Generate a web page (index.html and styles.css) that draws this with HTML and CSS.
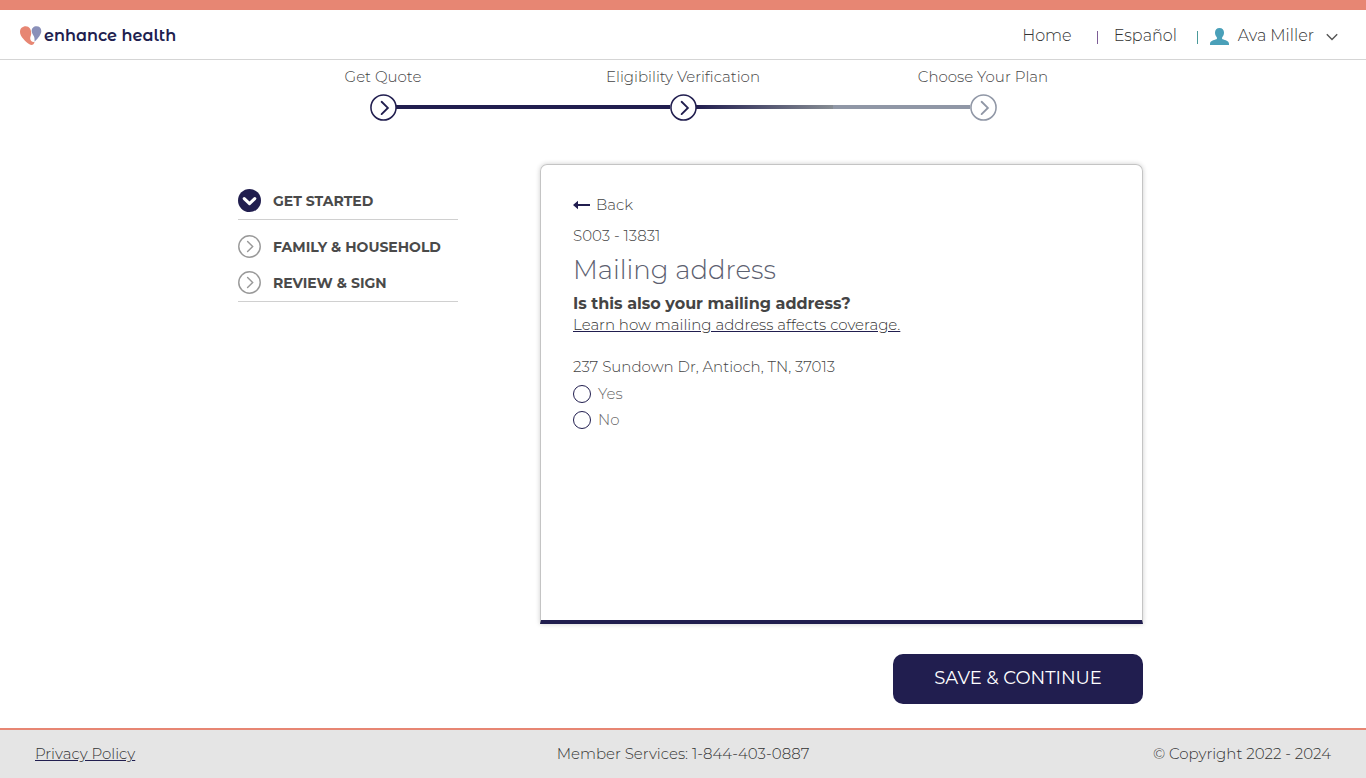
FILE: index.html
```html
<!DOCTYPE html>
<html lang="en">
<head>
<meta charset="utf-8">
<meta name="viewport" content="width=device-width, initial-scale=1">
<title>Mailing address | Enhance Health</title>
<link rel="stylesheet" href="styles.css">
</head>
<body>
<header class="header">
  <a class="logo" href="#">
    <svg class="logo-mark" viewBox="0 0 22 20" aria-hidden="true">
      <path fill="#e78673" d="M5.800.3C2.400.3 0 2.500 0 5.900c0 4.600 5.600 9.600 9.400 12.300 2.200 1.500 4.700.5 5.100-2.200-2.400.4-4.300-1.100-4.300-3.700 0-1.800.9-2.800 1-4.900C11.300 3.300 9.200.3 5.800.3z"/>
      <path fill="#8a90b9" d="M16.500.3c-2.900 0-4.900 2-4.800 5 .1 2.400 1.700 3.500 2.400 5.500.6 1.700.4 3.500.5 4.900C18.400 12 21.300 8.200 21.300 5c0-2.900-1.900-4.700-4.800-4.700z"/>
    </svg>
    <span>enhance health</span>
  </a>
  <nav class="nav">
    <a class="nav-link" href="#">Home</a>
    <span class="divider"></span>
    <a class="nav-link" href="#">Español</a>
    <span class="divider divider-user"></span>
    <button class="user" type="button">
      <svg class="user-icon" viewBox="0 0 19 17" aria-hidden="true"><path fill="#4aa0b9" d="M9.500 0C6.700 0 5 1.800 5 4.600c0 1.900.7 3.700 1.900 4.800v1.700c-1 .8-6.900 1.300-6.900 4.600V17h19v-1.300c0-3.300-5.900-3.800-6.900-4.600V9.400C13.300 8.300 14 6.500 14 4.600 14 1.800 12.300 0 9.500 0z"/></svg>
      <span>Ava Miller</span>
      <svg class="caret" viewBox="0 0 12 8" aria-hidden="true"><path d="M.8 1.200 6 6.500l5.200-5.300"/></svg>
    </button>
  </nav>
</header>

<ol class="steps">
  <li class="step">
    <span>Get Quote</span>
    <svg class="step-icon" viewBox="0 0 26 26" aria-hidden="true"><circle cx="13" cy="13" r="12.100"/><path d="m11.200 7.500 6 5.900-6 5.900"/></svg>
  </li>
  <li class="step step-current" aria-current="step">
    <span>Eligibility Verification</span>
    <svg class="step-icon" viewBox="0 0 26 26" aria-hidden="true"><circle cx="13" cy="13" r="12.100"/><path d="m11.200 7.500 6 5.900-6 5.900"/></svg>
  </li>
  <li class="step step-next">
    <span>Choose Your Plan</span>
    <svg class="step-icon" viewBox="0 0 26 26" aria-hidden="true"><circle cx="13" cy="13" r="12.100"/><path d="m11.200 7.500 6 5.900-6 5.900"/></svg>
  </li>
</ol>

<main class="main">
  <nav class="sections" aria-label="Application sections">
    <a class="section section-open" href="#">
      <svg class="section-icon" viewBox="0 0 24 24" aria-hidden="true"><circle cx="12" cy="12" r="12" fill="#211e4f"/><path d="m6.500 10 5.500 5.300L17.500 10" fill="none" stroke="#fff" stroke-width="3.200" stroke-linecap="round" stroke-linejoin="round"/></svg>
      <span>GET STARTED</span>
    </a>
    <div class="section-group">
      <a class="section" href="#">
        <svg class="section-icon" viewBox="0 0 24 24" aria-hidden="true"><g fill="none" stroke="#999" stroke-width="1.500"><circle cx="12" cy="12" r="11.200"/><path d="m10 6.800 5.300 5.200-5.300 5.200" stroke-linecap="round"/></g></svg>
        <span>FAMILY &amp; HOUSEHOLD</span>
      </a>
      <a class="section" href="#">
        <svg class="section-icon" viewBox="0 0 24 24" aria-hidden="true"><g fill="none" stroke="#999" stroke-width="1.500"><circle cx="12" cy="12" r="11.200"/><path d="m10 6.800 5.300 5.200-5.300 5.200" stroke-linecap="round"/></g></svg>
        <span>REVIEW &amp; SIGN</span>
      </a>
    </div>
  </nav>

  <form class="form">
    <div class="card">
      <a class="back" href="#">
        <svg class="back-icon" viewBox="0 0 17 10" aria-hidden="true"><path fill="#211e4f" d="M0 5 5 .7v3.200h12v2.200H5v3.200z"/></svg>
        <span>Back</span>
      </a>
      <p class="code">S003 - 13831</p>
      <h1 class="title">Mailing address</h1>
      <h2 class="question" id="question">Is this also your mailing address?</h2>
      <a class="learn" href="#">Learn how mailing address affects coverage.</a>
      <p class="address">237 Sundown Dr, Antioch, TN, 37013</p>
      <div class="options" role="radiogroup" aria-labelledby="question">
        <label class="option"><input class="radio" type="radio" name="mailing" value="yes">Yes</label>
        <label class="option"><input class="radio" type="radio" name="mailing" value="no">No</label>
      </div>
    </div>
    <button class="save" type="button">SAVE &amp; CONTINUE</button>
  </form>
</main>

<footer class="footer">
  <a class="privacy" href="#">Privacy Policy</a>
  <span>Member Services: 1-844-403-0887</span>
  <span class="copyright">© Copyright 2022 - 2024</span>
</footer>
</body>
</html>
```

FILE: styles.css
```css
:root {
  --navy: #211e4f;
  --coral: #e78673;
  --grey: #9097a6;
}

* {
  box-sizing: border-box;
}

body {
  display: flex;
  flex-direction: column;
  min-height: 100vh;
  margin: 0;
  background: #fff;
  color: #444;
  font: 300 15px/20px Montserrat, Inter, "Liberation Sans", sans-serif;
}

a {
  color: inherit;
  text-decoration: none;
}

button {
  font: inherit;
  cursor: pointer;
}

p,
h1,
h2 {
  margin: 0;
}

.header {
  display: flex;
  align-items: center;
  justify-content: space-between;
  height: 60px;
  padding: 3px 28px 0 20px;
  border-top: 10px solid var(--coral);
  border-bottom: 1px solid #d5d5d5;
}

.logo {
  display: flex;
  align-items: center;
  gap: 2px;
  color: var(--navy);
  font-family: "Montserrat Alternates", Montserrat, Lato, sans-serif;
  font-size: 16px;
  font-weight: 600;
}

.logo-mark {
  width: 22px;
  height: 20px;
}

.nav {
  display: flex;
  align-items: center;
  color: #333;
  font-size: 16px;
}

.divider {
  width: 1px;
  height: 13px;
  margin: 2px 16px 0 25px;
  background: #7d5d96;
}

.divider-user {
  margin: 2px 12px 0 20px;
  background: #4a9a9a;
}

.user {
  display: flex;
  align-items: center;
  padding: 0;
  border: 0;
  background: none;
  color: inherit;
}

.user-icon {
  width: 19px;
  height: 17px;
  margin-right: 9px;
}

.caret {
  width: 12px;
  height: 8px;
  margin: 2px 0 0 12px;
  fill: none;
  stroke: #555;
  stroke-width: 1.4;
}

.steps {
  display: grid;
  grid-template-columns: repeat(3, 1fr);
  width: 100%;
  max-width: 900px;
  margin: 0 auto;
  padding: 7px 0 0;
  list-style: none;
}

.step {
  position: relative;
  display: flex;
  flex-direction: column;
  align-items: center;
  gap: 7px;
}

.step-icon {
  width: 27px;
  height: 27px;
  fill: none;
  stroke: var(--navy);
  stroke-width: 1.5;
}

.step-icon path {
  stroke-width: 1.8;
  stroke-linecap: round;
}

.step-next .step-icon {
  stroke: var(--grey);
}

/* Connector between one step's circle and the next */
.step:not(:last-child)::after {
  content: "";
  position: absolute;
  bottom: 12px;
  left: calc(50% + 13px);
  width: calc(100% - 26px);
  height: 4px;
  background: var(--navy);
}

.step-current:not(:last-child)::after {
  background: linear-gradient(to right, var(--navy), #868c93 50%, #9097a6 50%);
}

.main {
  display: grid;
  grid-template-columns: 220px minmax(0, 1fr);
  gap: 82px;
  width: 100%;
  max-width: 920px;
  margin: 43px auto 24px;
  padding-left: 15px;
}

.sections {
  padding-top: 25px;
  color: #4a4a4a;
  font-size: 14px;
  font-weight: 700;
}

.section {
  display: flex;
  align-items: center;
  gap: 12px;
}

.section-icon {
  width: 23px;
  height: 23px;
}

.section-open {
  padding-bottom: 7px;
  border-bottom: 1px solid #d0d0d0;
}

.section-group {
  display: grid;
  gap: 13px;
  padding: 15px 0 7px;
  border-bottom: 1px solid #d0d0d0;
}

.form {
  display: flex;
  flex-direction: column;
  gap: 30px;
}

.card {
  min-height: 460px;
  padding: 30px 32px;
  border: 1px solid #c4c4c4;
  border-bottom: 4px solid var(--navy);
  border-radius: 7px 7px 0 0;
  box-shadow: 0 0 5px rgba(0, 0, 0, 0.2);
}

.back {
  display: flex;
  align-items: center;
  gap: 6px;
  width: fit-content;
}

.back-icon {
  width: 17px;
  height: 10px;
}

.code {
  margin-top: 11px;
}

.title {
  margin-top: 7px;
  color: #5c6070;
  font-size: 26px;
  font-weight: 300;
  line-height: 34px;
}

.question {
  margin-top: 6px;
  font-size: 16px;
  font-weight: 700;
  line-height: 22px;
}

.learn {
  color: #333;
  text-decoration: underline;
  text-decoration-color: var(--navy);
}

.address {
  margin-top: 22px;
}

.options {
  display: grid;
  justify-items: start;
  gap: 6px;
  margin-top: 7px;
  color: #666;
}

.option {
  display: flex;
  align-items: center;
  gap: 7px;
}

.radio {
  appearance: none;
  width: 18px;
  height: 18px;
  margin: 0;
  border: 1px solid var(--navy);
  border-radius: 50%;
}

.radio:checked {
  background: radial-gradient(circle, var(--navy) 45%, #fff 50%);
}

.save {
  align-self: flex-end;
  width: 250px;
  height: 50px;
  padding: 0 0 2px;
  border: 0;
  border-radius: 10px;
  background: var(--navy);
  color: #fff;
  font-size: 18px;
  font-weight: 400;
}

.footer {
  display: grid;
  grid-template-columns: 1fr auto 1fr;
  align-items: center;
  margin-top: auto;
  padding: 14px 35px;
  border-top: 2px solid var(--coral);
  background: #e5e5e5;
  color: #333;
}

.privacy {
  justify-self: start;
  text-decoration: underline;
  text-decoration-color: var(--navy);
}

.copyright {
  justify-self: end;
}
```
